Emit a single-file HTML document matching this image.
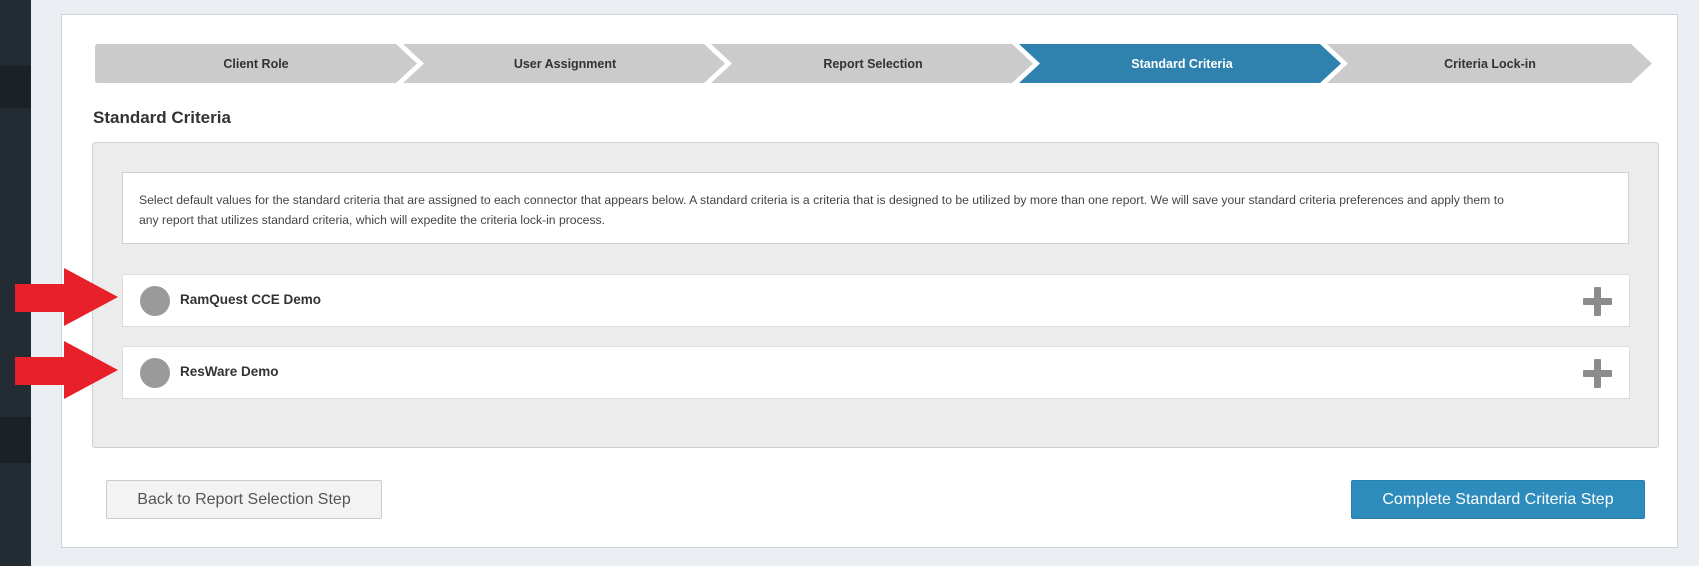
<!DOCTYPE html>
<html><head><style>
*{box-sizing:border-box;margin:0;padding:0}
body{width:1699px;height:566px;background:#ebeef3;font-family:"Liberation Sans",sans-serif;position:relative;overflow:hidden}
.side{position:absolute;left:0;top:0;width:31px;height:566px;background:#232c33}
.side div{position:absolute;left:0;width:31px;background:#1b2227}
.card{position:absolute;left:61px;top:14px;width:1617px;height:534px;background:#fff;border:1px solid #cfd4da}
.steps{position:absolute;left:95px;top:44px;width:1560px;height:39px}
.title{position:absolute;left:93px;top:108px;font-weight:bold;font-size:17px;color:#333}
.panel{position:absolute;left:92px;top:142px;width:1567px;height:306px;background:#ececec;border:1px solid #d0d0d0;border-radius:3px}
.desc{position:absolute;left:122px;top:172px;width:1507px;height:72px;background:#fff;border:1px solid #cfcfcf;padding:17px 16px;font-size:12.2px;line-height:20px;color:#444;white-space:nowrap}
.row{position:absolute;left:122px;width:1508px;height:53px;background:#fff;border:1px solid #ddd}
.row .c{position:absolute;left:17px;top:11px;width:30px;height:30px;border-radius:50%;background:#9a9a9a}
.row .n{position:absolute;left:57px;top:17px;font-weight:bold;font-size:13.5px;color:#333}
.row .p{position:absolute;right:17px;top:12px;width:29px;height:29px}
.row .p:before{content:"";position:absolute;left:0;top:11px;width:29px;height:7px;background:#8c8c8c;border-radius:1px}
.row .p:after{content:"";position:absolute;left:11px;top:0;width:7px;height:29px;background:#8c8c8c;border-radius:1px}
.btn{position:absolute;top:480px;height:39px;font-size:16px;line-height:37px;text-align:center;border-radius:2px}
</style></head><body>
<div class="side"><div style="top:66px;height:42px"></div><div style="top:417px;height:46px"></div></div>
<div class="card"></div>
<svg class="steps" width="1560" height="39" viewBox="0 0 1560 39">
<path d="M3 0H301L322 19.5L301 39H3Q0 39 0 36V3Q0 0 3 0Z" fill="#cbcbcb"/>
<path d="M308 0H609L630 19.5L609 39H308L329 19.5Z" fill="#cbcbcb"/>
<path d="M616 0H917L938 19.5L917 39H616L637 19.5Z" fill="#cbcbcb"/>
<path d="M924 0H1225L1246 19.5L1225 39H924L945 19.5Z" fill="#2e82ad"/>
<path d="M1232 0H1536L1557 19.5L1536 39H1232L1253 19.5Z" fill="#cbcbcb"/>
<g font-family="Liberation Sans, sans-serif" font-size="12.5" font-weight="bold" text-anchor="middle" fill="#333">
<text x="161" y="24">Client Role</text>
<text x="470" y="24">User Assignment</text>
<text x="778" y="24">Report Selection</text>
<text x="1087" y="24" fill="#fff">Standard Criteria</text>
<text x="1395" y="24">Criteria Lock-in</text>
</g></svg>
<div class="title">Standard Criteria</div>
<div class="panel"></div>
<div class="desc">Select default values for the standard criteria that are assigned to each connector that appears below. A standard criteria is a criteria that is designed to be utilized by more than one report. We will save your standard criteria preferences and apply them to<br>any report that utilizes standard criteria, which will expedite the criteria lock-in process.</div>
<div class="row" style="top:274px"><div class="c"></div><div class="n">RamQuest CCE Demo</div><div class="p"></div></div>
<div class="row" style="top:346px"><div class="c"></div><div class="n">ResWare Demo</div><div class="p"></div></div>
<svg style="position:absolute;left:14px;top:268px" width="106" height="60"><path d="M1 16H50V0L104 29L50 58V44H1Z" fill="#e8202a"/></svg>
<svg style="position:absolute;left:14px;top:341px" width="106" height="60"><path d="M1 16H50V0L104 29L50 58V44H1Z" fill="#e8202a"/></svg>
<div class="btn" style="left:106px;width:276px;background:#f3f3f3;border:1px solid #ccc;color:#555">Back to Report Selection Step</div>
<div class="btn" style="left:1351px;width:294px;background:#2e8cbd;border:1px solid #2a7fab;color:#fff">Complete Standard Criteria Step</div>
</body></html>
